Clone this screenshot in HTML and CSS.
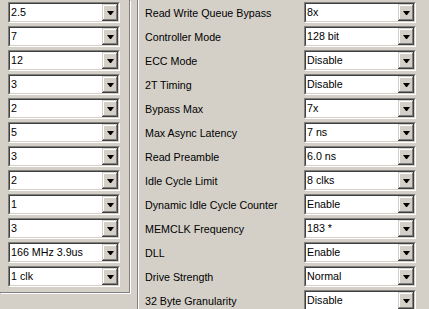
FILE: index.html
```html
<!DOCTYPE html>
<html lang="en">
<head>
    <meta charset="UTF-8">
    <title>Memory Timings</title>
    <link rel="stylesheet" href="styles.css">
</head>
<body>
    <div class="window">
        <div class="left-group">
            <div class="combo"><div class="field"><span class="value">2.5</span><span class="drop"><i class="arrow"></i></span></div></div>
            <div class="combo"><div class="field"><span class="value">7</span><span class="drop"><i class="arrow"></i></span></div></div>
            <div class="combo"><div class="field"><span class="value">12</span><span class="drop"><i class="arrow"></i></span></div></div>
            <div class="combo"><div class="field"><span class="value">3</span><span class="drop"><i class="arrow"></i></span></div></div>
            <div class="combo"><div class="field"><span class="value">2</span><span class="drop"><i class="arrow"></i></span></div></div>
            <div class="combo"><div class="field"><span class="value">5</span><span class="drop"><i class="arrow"></i></span></div></div>
            <div class="combo"><div class="field"><span class="value">3</span><span class="drop"><i class="arrow"></i></span></div></div>
            <div class="combo"><div class="field"><span class="value">2</span><span class="drop"><i class="arrow"></i></span></div></div>
            <div class="combo"><div class="field"><span class="value">1</span><span class="drop"><i class="arrow"></i></span></div></div>
            <div class="combo"><div class="field"><span class="value">3</span><span class="drop"><i class="arrow"></i></span></div></div>
            <div class="combo"><div class="field"><span class="value">166 MHz 3.9us</span><span class="drop"><i class="arrow"></i></span></div></div>
            <div class="combo"><div class="field"><span class="value">1 clk</span><span class="drop"><i class="arrow"></i></span></div></div>
        </div>

        <div class="right-group">
            <div class="row"><span class="label">Read Write Queue Bypass</span><div class="combo"><div class="field"><span class="value">8x</span><span class="drop"><i class="arrow"></i></span></div></div></div>
            <div class="row"><span class="label">Controller Mode</span><div class="combo"><div class="field"><span class="value">128 bit</span><span class="drop"><i class="arrow"></i></span></div></div></div>
            <div class="row"><span class="label">ECC Mode</span><div class="combo"><div class="field"><span class="value">Disable</span><span class="drop"><i class="arrow"></i></span></div></div></div>
            <div class="row"><span class="label">2T Timing</span><div class="combo"><div class="field"><span class="value">Disable</span><span class="drop"><i class="arrow"></i></span></div></div></div>
            <div class="row"><span class="label">Bypass Max</span><div class="combo"><div class="field"><span class="value">7x</span><span class="drop"><i class="arrow"></i></span></div></div></div>
            <div class="row"><span class="label">Max Async Latency</span><div class="combo"><div class="field"><span class="value">7 ns</span><span class="drop"><i class="arrow"></i></span></div></div></div>
            <div class="row"><span class="label">Read Preamble</span><div class="combo"><div class="field"><span class="value">6.0 ns</span><span class="drop"><i class="arrow"></i></span></div></div></div>
            <div class="row"><span class="label">Idle Cycle Limit</span><div class="combo"><div class="field"><span class="value">8 clks</span><span class="drop"><i class="arrow"></i></span></div></div></div>
            <div class="row"><span class="label">Dynamic Idle Cycle Counter</span><div class="combo"><div class="field"><span class="value">Enable</span><span class="drop"><i class="arrow"></i></span></div></div></div>
            <div class="row"><span class="label">MEMCLK Frequency</span><div class="combo"><div class="field"><span class="value">183 *</span><span class="drop"><i class="arrow"></i></span></div></div></div>
            <div class="row"><span class="label">DLL</span><div class="combo"><div class="field"><span class="value">Enable</span><span class="drop"><i class="arrow"></i></span></div></div></div>
            <div class="row"><span class="label">Drive Strength</span><div class="combo"><div class="field"><span class="value">Normal</span><span class="drop"><i class="arrow"></i></span></div></div></div>
            <div class="row"><span class="label">32 Byte Granularity</span><div class="combo"><div class="field"><span class="value">Disable</span><span class="drop"><i class="arrow"></i></span></div></div></div>
        </div>
    </div>
</body>
</html>
```

FILE: styles.css
```css
body {
    margin: 0;
    background: #d4d0c8;
    font-family: 'Liberation Sans', Arial, sans-serif;
    font-size: 10.7px;
    color: #000;
    overflow: hidden;
}

.window {
    display: flex;
    align-items: flex-start;
    width: 429px;
    height: 309px;
    overflow: hidden;
}

/* etched group frame, only right and bottom edges are on screen */
.left-group {
    width: 130px;
    height: 293px;
    display: flex;
    flex-direction: column;
    gap: 3px;
    padding: 2px 0 0 8px;
    box-sizing: border-box;
    border-right: 1px solid #808080;
    border-bottom: 1px solid #808080;
    box-shadow: 1px 1px 0 #fff;
}

.right-group {
    margin-left: 7px;
    height: 330px;
    padding: 0 0 0 7px;
    border-left: 1px solid #808080;
    box-shadow: inset 1px 0 0 #fff;
    display: flex;
    flex-direction: column;
}

.row {
    display: flex;
    align-items: center;
    height: 24px;
    padding-top: 1px;
    box-sizing: border-box;
}

.label {
    width: 159px;
    white-space: nowrap;
}

/* classic sunken combo box */
.combo {
    width: 112px;
    height: 21px;
    box-sizing: border-box;
    border: 1px solid;
    border-color: #808080 #fff #fff #808080;
    flex-shrink: 0;
}

.field {
    height: 100%;
    box-sizing: border-box;
    border: 1px solid;
    border-color: #404040 #d4d0c8 #d4d0c8 #404040;
    background: #fff;
    display: flex;
}

.value {
    flex: 1;
    padding-left: 1px;
    line-height: 17px;
    white-space: nowrap;
}

.drop {
    width: 16px;
    background: #d4d0c8;
    box-shadow: inset -1px -1px #404040, inset 1px 1px #d4d0c8, inset -2px -2px #808080, inset 2px 2px #fff;
    display: flex;
    align-items: center;
    justify-content: center;
}

.arrow {
    width: 1px;
    height: 0;
    border-top: 4px solid #000;
    border-left: 3px solid transparent;
    border-right: 3px solid transparent;
    margin-top: 1px;
}
```
